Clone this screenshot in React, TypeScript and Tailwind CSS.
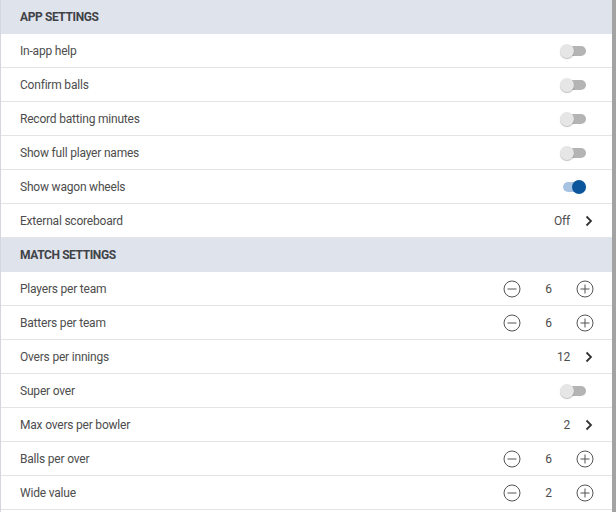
import React from "react";

type Row =
  | { kind: "header"; label: string }
  | { kind: "toggle"; label: string; on: boolean }
  | { kind: "link"; label: string; value: string }
  | { kind: "stepper"; label: string; value: string };

const rows: Row[] = [
  { kind: "header", label: "APP SETTINGS" },
  { kind: "toggle", label: "In-app help", on: false },
  { kind: "toggle", label: "Confirm balls", on: false },
  { kind: "toggle", label: "Record batting minutes", on: false },
  { kind: "toggle", label: "Show full player names", on: false },
  { kind: "toggle", label: "Show wagon wheels", on: true },
  { kind: "link", label: "External scoreboard", value: "Off" },
  { kind: "header", label: "MATCH SETTINGS" },
  { kind: "stepper", label: "Players per team", value: "6" },
  { kind: "stepper", label: "Batters per team", value: "6" },
  { kind: "link", label: "Overs per innings", value: "12" },
  { kind: "toggle", label: "Super over", on: false },
  { kind: "link", label: "Max overs per bowler", value: "2" },
  { kind: "stepper", label: "Balls per over", value: "6" },
  { kind: "stepper", label: "Wide value", value: "2" },
];

function Toggle({ on }: { on: boolean }) {
  return (
    <div className="relative w-[26px] h-[14px] mr-[26px]">
      <div
        className={`absolute left-[3px] right-0 top-[2px] h-[10px] rounded-full ${
          on ? "bg-[#a8c3e2]" : "bg-[#b4b4b4]"
        }`}
      />
      <div
        className={`absolute top-0 w-[14px] h-[14px] rounded-full ${
          on ? "right-0 bg-[#0a559c]" : "left-0 bg-[#e6e6e6] shadow-[0_1px_1px_rgba(0,0,0,0.25)]"
        }`}
      />
    </div>
  );
}

function Chevron() {
  return (
    <svg width="8" height="12" viewBox="0 0 8 12" className="ml-[15px] mr-[19px]">
      <path d="M1.5 1.5 L6 6 L1.5 10.5" fill="none" stroke="#333" strokeWidth="1.8" />
    </svg>
  );
}

function CircleIcon({ plus }: { plus: boolean }) {
  return (
    <svg width="18" height="18" viewBox="0 0 18 18">
      <circle cx="9" cy="9" r="8" fill="none" stroke="#555" strokeWidth="1" />
      <path d="M4.5 9 H13.5" stroke="#555" strokeWidth="1" />
      {plus && <path d="M9 4.5 V13.5" stroke="#555" strokeWidth="1" />}
    </svg>
  );
}

export default function App() {
  return (
    <div
      className="w-[616px] h-[512px] bg-white flex overflow-hidden"
      style={{ fontFamily: "Roboto,'Liberation Sans',sans-serif" }}
    >
      <div className="flex-1 border-l border-[#d4d8de] flex flex-col">
        {rows.map((r, i) =>
          r.kind === "header" ? (
            <div
              key={i}
              className="h-[34px] shrink-0 bg-[#dfe3ec] flex items-center pl-[19px] text-[12px] tracking-[-0.4px] font-bold text-[#3f4247]"
            >
              {r.label}
            </div>
          ) : (
            <div
              key={i}
              className="h-[34px] shrink-0 flex items-center border-b border-[#e2e4e8] pl-[19px] pt-px text-[12px] tracking-[-0.2px] text-[#4d4d4d]"
            >
              <span className="flex-1">{r.label}</span>
              {r.kind === "toggle" && <Toggle on={r.on} />}
              {r.kind === "link" && (
                <div className="flex items-center">
                  <span>{r.value}</span>
                  <Chevron />
                </div>
              )}
              {r.kind === "stepper" && (
                <div className="flex items-center mr-[18px]">
                  <CircleIcon plus={false} />
                  <span className="w-[55px] text-center">{r.value}</span>
                  <CircleIcon plus={true} />
                </div>
              )}
            </div>
          )
        )}
      </div>
      <div className="w-[4px] bg-[#a3a3a3]" />
    </div>
  );
}
